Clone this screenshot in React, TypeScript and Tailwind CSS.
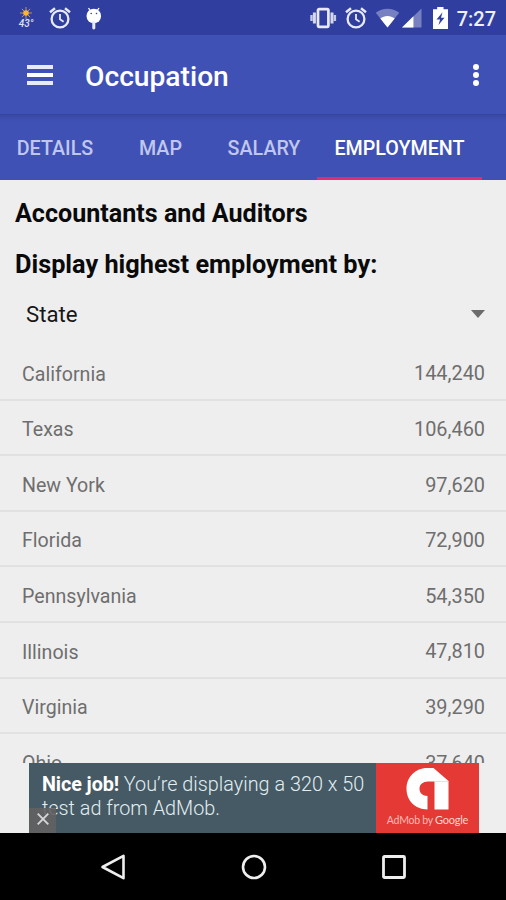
import { useState } from "react";

interface StateRow {
  name: string;
  employed: string;
}

const tabs = [
  { label: "DETAILS", width: "w-[110px]" },
  { label: "MAP", width: "w-[101px]" },
  { label: "SALARY", width: "w-[106px]" },
  { label: "EMPLOYMENT", width: "w-[165px]" },
];

const rows: StateRow[] = [
  { name: "California", employed: "144,240" },
  { name: "Texas", employed: "106,460" },
  { name: "New York", employed: "97,620" },
  { name: "Florida", employed: "72,900" },
  { name: "Pennsylvania", employed: "54,350" },
  { name: "Illinois", employed: "47,810" },
  { name: "Virginia", employed: "39,290" },
  { name: "Ohio", employed: "37,640" },
];

function AlarmIcon() {
  return (
    <svg className="h-[22px] w-[22px]" viewBox="0 0 22 22" fill="none" stroke="#e8eaf8" strokeWidth="2.3">
      <circle cx="11" cy="12" r="8.4" />
      <path d="M11 7v5.3l3.6 2.5" strokeWidth="1.8" />
      <path d="M1 5.2 6 1.2M21 5.2 16 1.2" strokeWidth="2.4" />
    </svg>
  );
}

function StatusBar() {
  return (
    <div className="flex h-[35px] items-center justify-between bg-[#303f9f] pl-[16px] pr-[10px]">
      <div className="flex items-center">
        {/* weather */}
        <div className="flex w-[20px] flex-col items-center">
          <svg className="h-[12px] w-[12px]" viewBox="0 0 13 13">
            <path d="M6.5 0v13M0 6.5h13M2 2l9 9M11 2l-9 9" stroke="#c99a62" strokeWidth="1" />
            <circle cx="6.5" cy="6.5" r="3" fill="#ffb52e" />
          </svg>
          <span className="h-[9px] text-[10px] leading-[9px] font-medium text-[#dfe2f5] italic">43°</span>
        </div>
        <div className="ml-[13px]">
          <AlarmIcon />
        </div>
        {/* round bugdroid */}
        <svg className="mt-[1px] ml-[14px] h-[23px] w-[18px]" viewBox="0 0 18 23">
          <path d="M3.5 1 5.5 4M14 1l-2 3" stroke="#fff" strokeWidth="1.3" />
          <circle cx="8.8" cy="9" r="7.3" fill="#fff" />
          <rect x="7.3" y="14" width="3" height="8.5" rx="1.4" fill="#e8eaf8" />
          <circle cx="6.2" cy="6.5" r=".8" fill="#303f9f" />
          <circle cx="11.5" cy="6.5" r=".8" fill="#303f9f" />
        </svg>
      </div>
      <div className="flex items-center">
        {/* vibrate */}
        <svg className="h-[22px] w-[28px]" viewBox="0 0 28 22">
          <rect x="9" y="2.2" width="10.4" height="17.6" rx="1.2" fill="none" stroke="#e8eaf8" strokeWidth="2.7" />
          <path d="M5.4 5.5v11M23 5.5v11" stroke="#d5d9f0" strokeWidth="3" />
          <path d="M2.5 8v6M25.9 8v6" stroke="#c5cae9" strokeWidth="2.4" />
        </svg>
        <div className="ml-[8px]">
          <AlarmIcon />
        </div>
        {/* wifi */}
        <svg className="ml-[8px] h-[20px] w-[25px]" viewBox="0 0 26 20">
          <path d="M13 20 .8 4.6C8 -1 18 -1 25.2 4.6z" fill="#7781c1" />
          <path d="M13 20 5.5 10.5c4.3-3.6 10.7-3.6 15 0z" fill="#fff" />
        </svg>
        {/* signal */}
        <svg className="ml-[2px] h-[20px] w-[20px]" viewBox="0 0 21 20">
          <path d="M0 20 20.5 0v20z" fill="#7781c1" />
          <path d="M0 20 12 8.2V20z" fill="#fff" />
        </svg>
        {/* battery */}
        <svg className="ml-[11px] h-[22px] w-[15px]" viewBox="0 0 15 22">
          <path d="M4.2 0h6.3v2.3H15V22H0V2.3h4.2z" fill="#fff" />
          <path d="M9.5 5.2 3.5 12.4h3.6L5.5 18l6-7.3H8z" fill="#303f9f" />
        </svg>
        <span className="mt-[2px] ml-[9px] text-[20px] leading-none font-medium text-[#eef0fa]">7:27</span>
      </div>
    </div>
  );
}

function AdBanner() {
  return (
    <div className="relative ml-[29px] flex h-[70px] w-[450px] bg-[#455a64]">
      <p className="flex-1 pt-[10px] pl-[13px] text-[19.8px] leading-[23.5px] font-light whitespace-nowrap text-[#e3eef2]">
        <b className="tracking-[-0.1px] font-bold text-white">Nice job!</b>{" "}
        <span className="tracking-[0.03px]">You’re displaying a 320 x 50</span>
        <br />
        <span>test ad from AdMob.</span>
      </p>
      <div className="flex w-[103px] flex-col items-center bg-[#e53935] pt-[4px]">
        <svg className="mr-[1px] h-[43px] w-[43px]" viewBox="0 0 43 43">
          <path
            d="M21.5 42.5C9 42.5.5 33.5.5 21.8S9.5 1 21 1h6.5L42.5 14v28.5H28.5V14.5H22c-5 0-8.5 3-8.5 7.3s3.3 7.2 8 7.2z"
            fill="#fff"
          />
          <path d="M28.5 14.5h14" stroke="#f0d4d3" strokeWidth=".8" />
        </svg>
        <span className="mt-[3px] text-[10.5px] leading-[14px] font-normal tracking-[-0.25px] whitespace-nowrap text-[#fbb9b6] font-['Lato',sans-serif]">
          AdMob by <span className="text-[11px] text-[#ffd5d2]">Google</span>
        </span>
      </div>
      <button className="absolute bottom-0 left-0 flex h-[25px] w-[27px] items-center justify-center bg-[#616161]/90">
        <svg className="mt-[-3px] ml-[1px] h-[12px] w-[12px]" viewBox="0 0 12 12">
          <path d="m.7.7 10.6 10.6M11.3.7.7 11.3" stroke="#d5d5d5" strokeWidth="1.9" />
        </svg>
      </button>
    </div>
  );
}

export default function App() {
  const [activeTab, setActiveTab] = useState("EMPLOYMENT");

  return (
    <div className="flex h-[900px] w-[506px] flex-col overflow-hidden bg-[#eeeeee] font-['Roboto',sans-serif]">
      <StatusBar />

      {/* Toolbar */}
      <header className="flex h-[80px] items-center border-b border-[#36459b] bg-[#3f51b5] pr-[27px] pl-[27px]">
        <button className="flex flex-col gap-[4px]">
          <span className="h-[4px] w-[26px] bg-[#e8eaf8]" />
          <span className="h-[4px] w-[26px] bg-white" />
          <span className="h-[4px] w-[26px] bg-[#e8eaf8]" />
        </button>
        <h1 className="mt-[5px] ml-[32px] flex-1 text-[28.2px] leading-none font-medium text-white">Occupation</h1>
        <button className="flex flex-col gap-[2px]">
          <span className="h-[6px] w-[6px] rounded-full bg-white" />
          <span className="h-[6px] w-[6px] rounded-full bg-white" />
          <span className="h-[6px] w-[6px] rounded-full bg-white" />
        </button>
      </header>

      {/* Tabs */}
      <nav className="flex h-[65px] bg-[#3f51b5] bg-linear-to-b from-[#394aa4] from-0% to-[#3f51b5] to-10% text-[19.7px] font-medium">
        {tabs.map((tab) => (
          <button
            key={tab.label}
            onClick={() => setActiveTab(tab.label)}
            className={`${tab.width} border-b-3 pt-[5px] ${
              activeTab === tab.label ? "border-[#e22a78] text-white" : "border-transparent text-[#c0c7eb]"
            }`}
          >
            {tab.label}
          </button>
        ))}
      </nav>

      <main className="h-[583px] overflow-hidden">
        <h2 className="mt-[19px] pl-[15px] text-[25.1px] leading-[30px] font-bold text-[#0a0a0a]">
          Accountants and Auditors
        </h2>
        <h2 className="mt-[21px] pl-[15px] text-[25.3px] leading-[30px] font-bold text-[#0a0a0a]">
          Display highest employment by:
        </h2>
        <button className="mt-[20px] flex h-[30px] w-full items-center justify-between pr-[21px] pl-[26px] text-[22.2px] text-[#161616]">
          <span>State</span>
          <svg className="mt-[-2px] h-[8px] w-[14px]" viewBox="0 0 14 8">
            <path d="M0 0h14L7 8z" fill="#6b6b6b" />
          </svg>
        </button>
        <ul className="mt-[15px]">
          {rows.map((row) => (
            <li
              key={row.name}
              className="flex h-[55.6px] items-center justify-between border-b-2 border-[#e1e1e1] pt-[5px] pr-[21px] pl-[22px] text-[19.6px] text-[#6e6e6e]"
            >
              <span>{row.name}</span>
              <span className="text-[19.9px]">{row.employed}</span>
            </li>
          ))}
        </ul>
      </main>

      <AdBanner />

      {/* Navigation bar */}
      <footer className="flex h-[67px] items-center justify-between bg-black pr-[99px] pl-[100px]">
        <svg className="h-[26px] w-[26px]" viewBox="0 0 26 26" fill="none" stroke="#eee" strokeWidth="2.6">
          <path d="M2.5 13 23.5 1.8v22.4z" strokeLinejoin="round" />
        </svg>
        <svg className="h-[26px] w-[26px]" viewBox="0 0 26 26" fill="none" stroke="#eee" strokeWidth="2.6">
          <circle cx="13" cy="13" r="11" />
        </svg>
        <svg className="h-[24px] w-[26px]" viewBox="0 0 26 24" fill="none" stroke="#eee" strokeWidth="2.8">
          <rect x="2.5" y="1.5" width="21" height="21" rx="1" />
        </svg>
      </footer>
    </div>
  );
}
